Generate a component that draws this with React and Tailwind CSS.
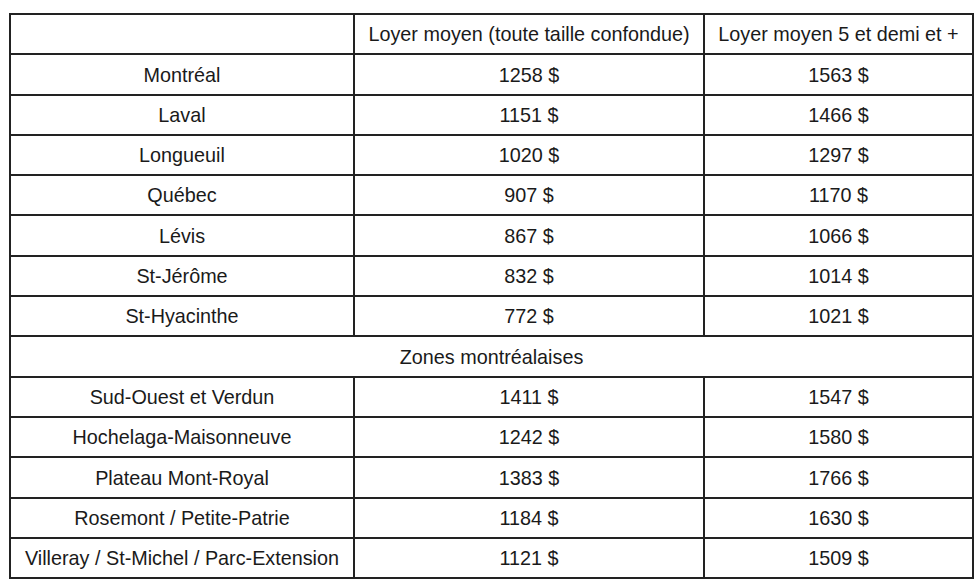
import React from "react";

const rows = [
  ["Montréal", "1258 $", "1563 $"],
  ["Laval", "1151 $", "1466 $"],
  ["Longueuil", "1020 $", "1297 $"],
  ["Québec", "907 $", "1170 $"],
  ["Lévis", "867 $", "1066 $"],
  ["St-Jérôme", "832 $", "1014 $"],
  ["St-Hyacinthe", "772 $", "1021 $"],
];
const zones = [
  ["Sud-Ouest et Verdun", "1411 $", "1547 $"],
  ["Hochelaga-Maisonneuve", "1242 $", "1580 $"],
  ["Plateau Mont-Royal", "1383 $", "1766 $"],
  ["Rosemont / Petite-Patrie", "1184 $", "1630 $"],
  ["Villeray / St-Michel / Parc-Extension", "1121 $", "1509 $"],
];

const td = "border-2 border-[#222] h-[40.3px] p-0 pt-[2px] text-center align-middle";

function Row({ r }) {
  return (
    <tr>
      <td className={td}>{r[0]}</td>
      <td className={td}>{r[1]}</td>
      <td className={td}>{r[2]}</td>
    </tr>
  );
}

export default function App() {
  return (
    <div className="w-[980px] h-[580px] bg-white overflow-hidden pt-[13px] pl-[9px]">
      <table
        className="border-collapse w-[963px] table-fixed text-[#1a1a1a] text-[19.8px] leading-none"
        style={{ fontFamily: '"Liberation Sans", Arial, sans-serif' }}
      >
        <colgroup>
          <col className="w-[344px]" />
          <col className="w-[350px]" />
          <col className="w-[269px]" />
        </colgroup>
        <tbody>
          <tr>
            <td className={td}></td>
            <td className={td}>Loyer moyen (toute taille confondue)</td>
            <td className={td}>Loyer moyen 5 et demi et +</td>
          </tr>
          {rows.map((r) => (
            <Row key={r[0]} r={r} />
          ))}
          <tr>
            <td className={td} colSpan={3}>Zones montréalaises</td>
          </tr>
          {zones.map((r) => (
            <Row key={r[0]} r={r} />
          ))}
        </tbody>
      </table>
    </div>
  );
}
